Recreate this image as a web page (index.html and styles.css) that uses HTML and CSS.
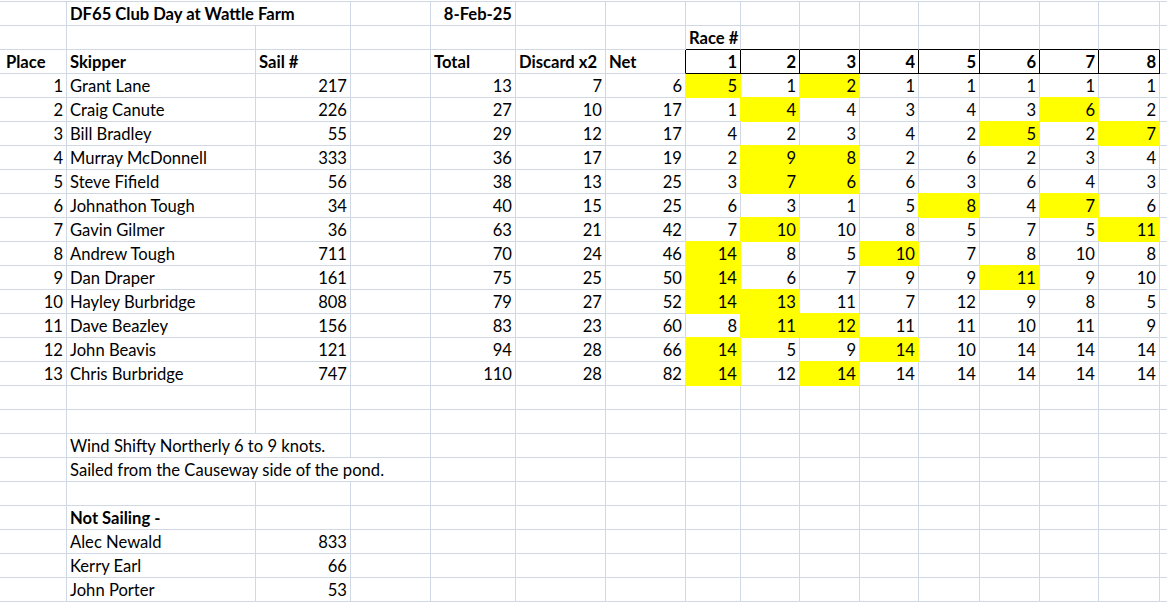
FILE: index.html
```html
<!DOCTYPE html>
<html lang="en">
<head>
<meta charset="utf-8">
<title>DF65 Club Day at Wattle Farm</title>
<link rel="stylesheet" href="styles.css">
</head>
<body>
<div class="sheet">
  <!-- row 1 -->
  <div class="c"></div><div class="c b s2">DF65 Club Day at Wattle Farm</div><div class="c"></div><div class="c r b">8-Feb-25</div><div class="c"></div><div class="c"></div><div class="c"></div><div class="c"></div><div class="c"></div><div class="c"></div><div class="c"></div><div class="c"></div><div class="c"></div><div class="c"></div><div class="c e"></div>
  <!-- row 2 -->
  <div class="c"></div><div class="c"></div><div class="c"></div><div class="c"></div><div class="c"></div><div class="c"></div><div class="c"></div><div class="c b hb">Race #</div><div class="c hb"></div><div class="c hb"></div><div class="c hb"></div><div class="c hb"></div><div class="c hb"></div><div class="c hb"></div><div class="c hb"></div><div class="c e"></div>
  <!-- row 3 -->
  <div class="c b pl">Place</div><div class="c b">Skipper</div><div class="c b">Sail #</div><div class="c"></div><div class="c b">Total</div><div class="c b">Discard x2</div><div class="c b hr">Net</div><div class="c r b hc">1</div><div class="c r b hc">2</div><div class="c r b hc">3</div><div class="c r b hc">4</div><div class="c r b hc">5</div><div class="c r b hc">6</div><div class="c r b hc">7</div><div class="c r b hc">8</div><div class="c e"></div>
  <!-- data -->
  <div class="c r">1</div><div class="c">Grant Lane</div><div class="c r">217</div><div class="c"></div><div class="c r">13</div><div class="c r">7</div><div class="c r">6</div><div class="c r y y1">5</div><div class="c r">1</div><div class="c r y y1">2</div><div class="c r">1</div><div class="c r">1</div><div class="c r">1</div><div class="c r">1</div><div class="c r">1</div><div class="c e"></div>
  <div class="c r">2</div><div class="c">Craig Canute</div><div class="c r">226</div><div class="c"></div><div class="c r">27</div><div class="c r">10</div><div class="c r">17</div><div class="c r">1</div><div class="c r y">4</div><div class="c r">4</div><div class="c r">3</div><div class="c r">4</div><div class="c r">3</div><div class="c r y">6</div><div class="c r">2</div><div class="c e"></div>
  <div class="c r">3</div><div class="c">Bill Bradley</div><div class="c r">55</div><div class="c"></div><div class="c r">29</div><div class="c r">12</div><div class="c r">17</div><div class="c r">4</div><div class="c r">2</div><div class="c r">3</div><div class="c r">4</div><div class="c r">2</div><div class="c r y">5</div><div class="c r">2</div><div class="c r y">7</div><div class="c e"></div>
  <div class="c r">4</div><div class="c">Murray McDonnell</div><div class="c r">333</div><div class="c"></div><div class="c r">36</div><div class="c r">17</div><div class="c r">19</div><div class="c r">2</div><div class="c r y">9</div><div class="c r y">8</div><div class="c r">2</div><div class="c r">6</div><div class="c r">2</div><div class="c r">3</div><div class="c r">4</div><div class="c e"></div>
  <div class="c r">5</div><div class="c">Steve Fifield</div><div class="c r">56</div><div class="c"></div><div class="c r">38</div><div class="c r">13</div><div class="c r">25</div><div class="c r">3</div><div class="c r y">7</div><div class="c r y">6</div><div class="c r">6</div><div class="c r">3</div><div class="c r">6</div><div class="c r">4</div><div class="c r">3</div><div class="c e"></div>
  <div class="c r">6</div><div class="c">Johnathon Tough</div><div class="c r">34</div><div class="c"></div><div class="c r">40</div><div class="c r">15</div><div class="c r">25</div><div class="c r">6</div><div class="c r">3</div><div class="c r">1</div><div class="c r">5</div><div class="c r y">8</div><div class="c r">4</div><div class="c r y">7</div><div class="c r">6</div><div class="c e"></div>
  <div class="c r">7</div><div class="c">Gavin Gilmer</div><div class="c r">36</div><div class="c"></div><div class="c r">63</div><div class="c r">21</div><div class="c r">42</div><div class="c r">7</div><div class="c r y">10</div><div class="c r">10</div><div class="c r">8</div><div class="c r">5</div><div class="c r">7</div><div class="c r">5</div><div class="c r y">11</div><div class="c e"></div>
  <div class="c r">8</div><div class="c">Andrew Tough</div><div class="c r">711</div><div class="c"></div><div class="c r">70</div><div class="c r">24</div><div class="c r">46</div><div class="c r y">14</div><div class="c r">8</div><div class="c r">5</div><div class="c r y">10</div><div class="c r">7</div><div class="c r">8</div><div class="c r">10</div><div class="c r">8</div><div class="c e"></div>
  <div class="c r">9</div><div class="c">Dan Draper</div><div class="c r">161</div><div class="c"></div><div class="c r">75</div><div class="c r">25</div><div class="c r">50</div><div class="c r y">14</div><div class="c r">6</div><div class="c r">7</div><div class="c r">9</div><div class="c r">9</div><div class="c r y">11</div><div class="c r">9</div><div class="c r">10</div><div class="c e"></div>
  <div class="c r">10</div><div class="c">Hayley Burbridge</div><div class="c r">808</div><div class="c"></div><div class="c r">79</div><div class="c r">27</div><div class="c r">52</div><div class="c r y">14</div><div class="c r y">13</div><div class="c r">11</div><div class="c r">7</div><div class="c r">12</div><div class="c r">9</div><div class="c r">8</div><div class="c r">5</div><div class="c e"></div>
  <div class="c r">11</div><div class="c">Dave Beazley</div><div class="c r">156</div><div class="c"></div><div class="c r">83</div><div class="c r">23</div><div class="c r">60</div><div class="c r">8</div><div class="c r y">11</div><div class="c r y">12</div><div class="c r">11</div><div class="c r">11</div><div class="c r">10</div><div class="c r">11</div><div class="c r">9</div><div class="c e"></div>
  <div class="c r">12</div><div class="c">John Beavis</div><div class="c r">121</div><div class="c"></div><div class="c r">94</div><div class="c r">28</div><div class="c r">66</div><div class="c r y">14</div><div class="c r">5</div><div class="c r">9</div><div class="c r y">14</div><div class="c r">10</div><div class="c r">14</div><div class="c r">14</div><div class="c r">14</div><div class="c e"></div>
  <div class="c r">13</div><div class="c">Chris Burbridge</div><div class="c r">747</div><div class="c"></div><div class="c r">110</div><div class="c r">28</div><div class="c r">82</div><div class="c r y">14</div><div class="c r">12</div><div class="c r y">14</div><div class="c r">14</div><div class="c r">14</div><div class="c r">14</div><div class="c r">14</div><div class="c r">14</div><div class="c e"></div>
  <!-- blank rows -->
  <div class="c"></div><div class="c"></div><div class="c"></div><div class="c"></div><div class="c"></div><div class="c"></div><div class="c"></div><div class="c"></div><div class="c"></div><div class="c"></div><div class="c"></div><div class="c"></div><div class="c"></div><div class="c"></div><div class="c"></div><div class="c e"></div>
  <div class="c"></div><div class="c"></div><div class="c"></div><div class="c"></div><div class="c"></div><div class="c"></div><div class="c"></div><div class="c"></div><div class="c"></div><div class="c"></div><div class="c"></div><div class="c"></div><div class="c"></div><div class="c"></div><div class="c"></div><div class="c e"></div>
  <!-- notes -->
  <div class="c"></div><div class="c s2">Wind Shifty Northerly 6 to 9 knots.</div><div class="c"></div><div class="c"></div><div class="c"></div><div class="c"></div><div class="c"></div><div class="c"></div><div class="c"></div><div class="c"></div><div class="c"></div><div class="c"></div><div class="c"></div><div class="c"></div><div class="c e"></div>
  <div class="c"></div><div class="c s3">Sailed from the Causeway side of the pond.</div><div class="c"></div><div class="c"></div><div class="c"></div><div class="c"></div><div class="c"></div><div class="c"></div><div class="c"></div><div class="c"></div><div class="c"></div><div class="c"></div><div class="c"></div><div class="c e"></div>
  <div class="c"></div><div class="c"></div><div class="c"></div><div class="c"></div><div class="c"></div><div class="c"></div><div class="c"></div><div class="c"></div><div class="c"></div><div class="c"></div><div class="c"></div><div class="c"></div><div class="c"></div><div class="c"></div><div class="c"></div><div class="c e"></div>
  <!-- not sailing -->
  <div class="c"></div><div class="c b">Not Sailing -</div><div class="c"></div><div class="c"></div><div class="c"></div><div class="c"></div><div class="c"></div><div class="c"></div><div class="c"></div><div class="c"></div><div class="c"></div><div class="c"></div><div class="c"></div><div class="c"></div><div class="c"></div><div class="c e"></div>
  <div class="c"></div><div class="c">Alec Newald</div><div class="c r">833</div><div class="c"></div><div class="c"></div><div class="c"></div><div class="c"></div><div class="c"></div><div class="c"></div><div class="c"></div><div class="c"></div><div class="c"></div><div class="c"></div><div class="c"></div><div class="c"></div><div class="c e"></div>
  <div class="c"></div><div class="c">Kerry Earl</div><div class="c r">66</div><div class="c"></div><div class="c"></div><div class="c"></div><div class="c"></div><div class="c"></div><div class="c"></div><div class="c"></div><div class="c"></div><div class="c"></div><div class="c"></div><div class="c"></div><div class="c"></div><div class="c e"></div>
  <div class="c"></div><div class="c">John Porter</div><div class="c r">53</div><div class="c"></div><div class="c"></div><div class="c"></div><div class="c"></div><div class="c"></div><div class="c"></div><div class="c"></div><div class="c"></div><div class="c"></div><div class="c"></div><div class="c"></div><div class="c"></div><div class="c e"></div>
</div>
</body>
</html>
```

FILE: styles.css
```css
html, body {
  margin: 0;
  padding: 0;
  background: #fff;
  overflow: hidden;
}

body {
  font-family: Lato, "Liberation Sans", sans-serif;
  font-size: 16.6px;
  color: #000;
}

.sheet {
  display: grid;
  grid-template-columns: 67px 189px 95px 80px 85px 90px 80px 55px 59px 60px 59px 61px 60px 59px 61px 1fr;
  grid-auto-rows: 24px;
  margin-top: 1px;
  border-top: 1px solid #d0d7e5;
}

.c {
  box-sizing: border-box;
  display: flex;
  align-items: flex-end;
  padding: 0 3px 1px;
  line-height: 20px;
  white-space: nowrap;
  border-right: 1px solid #d0d7e5;
  border-bottom: 1px solid #d0d7e5;
  min-width: 0;
}

.r { justify-content: flex-end; }
.b { font-weight: 700; }
.pl { padding-left: 6px; }
.e { border-right: 0; }

.s2 { grid-column: span 2; }
.s3 { grid-column: span 3; }

.y {
  background: #ffff00;
  border-right-color: #ffff00;
  border-bottom-color: #ffff00;
  box-shadow: -1px -1px 0 #ffff00;
}
.y1 { box-shadow: -1px 0 0 #ffff00; }

.hb { border-bottom-color: #000; }
.hr { border-right-color: #000; }
.hc {
  border-right-color: #000;
  border-bottom-color: #000;
}
```
